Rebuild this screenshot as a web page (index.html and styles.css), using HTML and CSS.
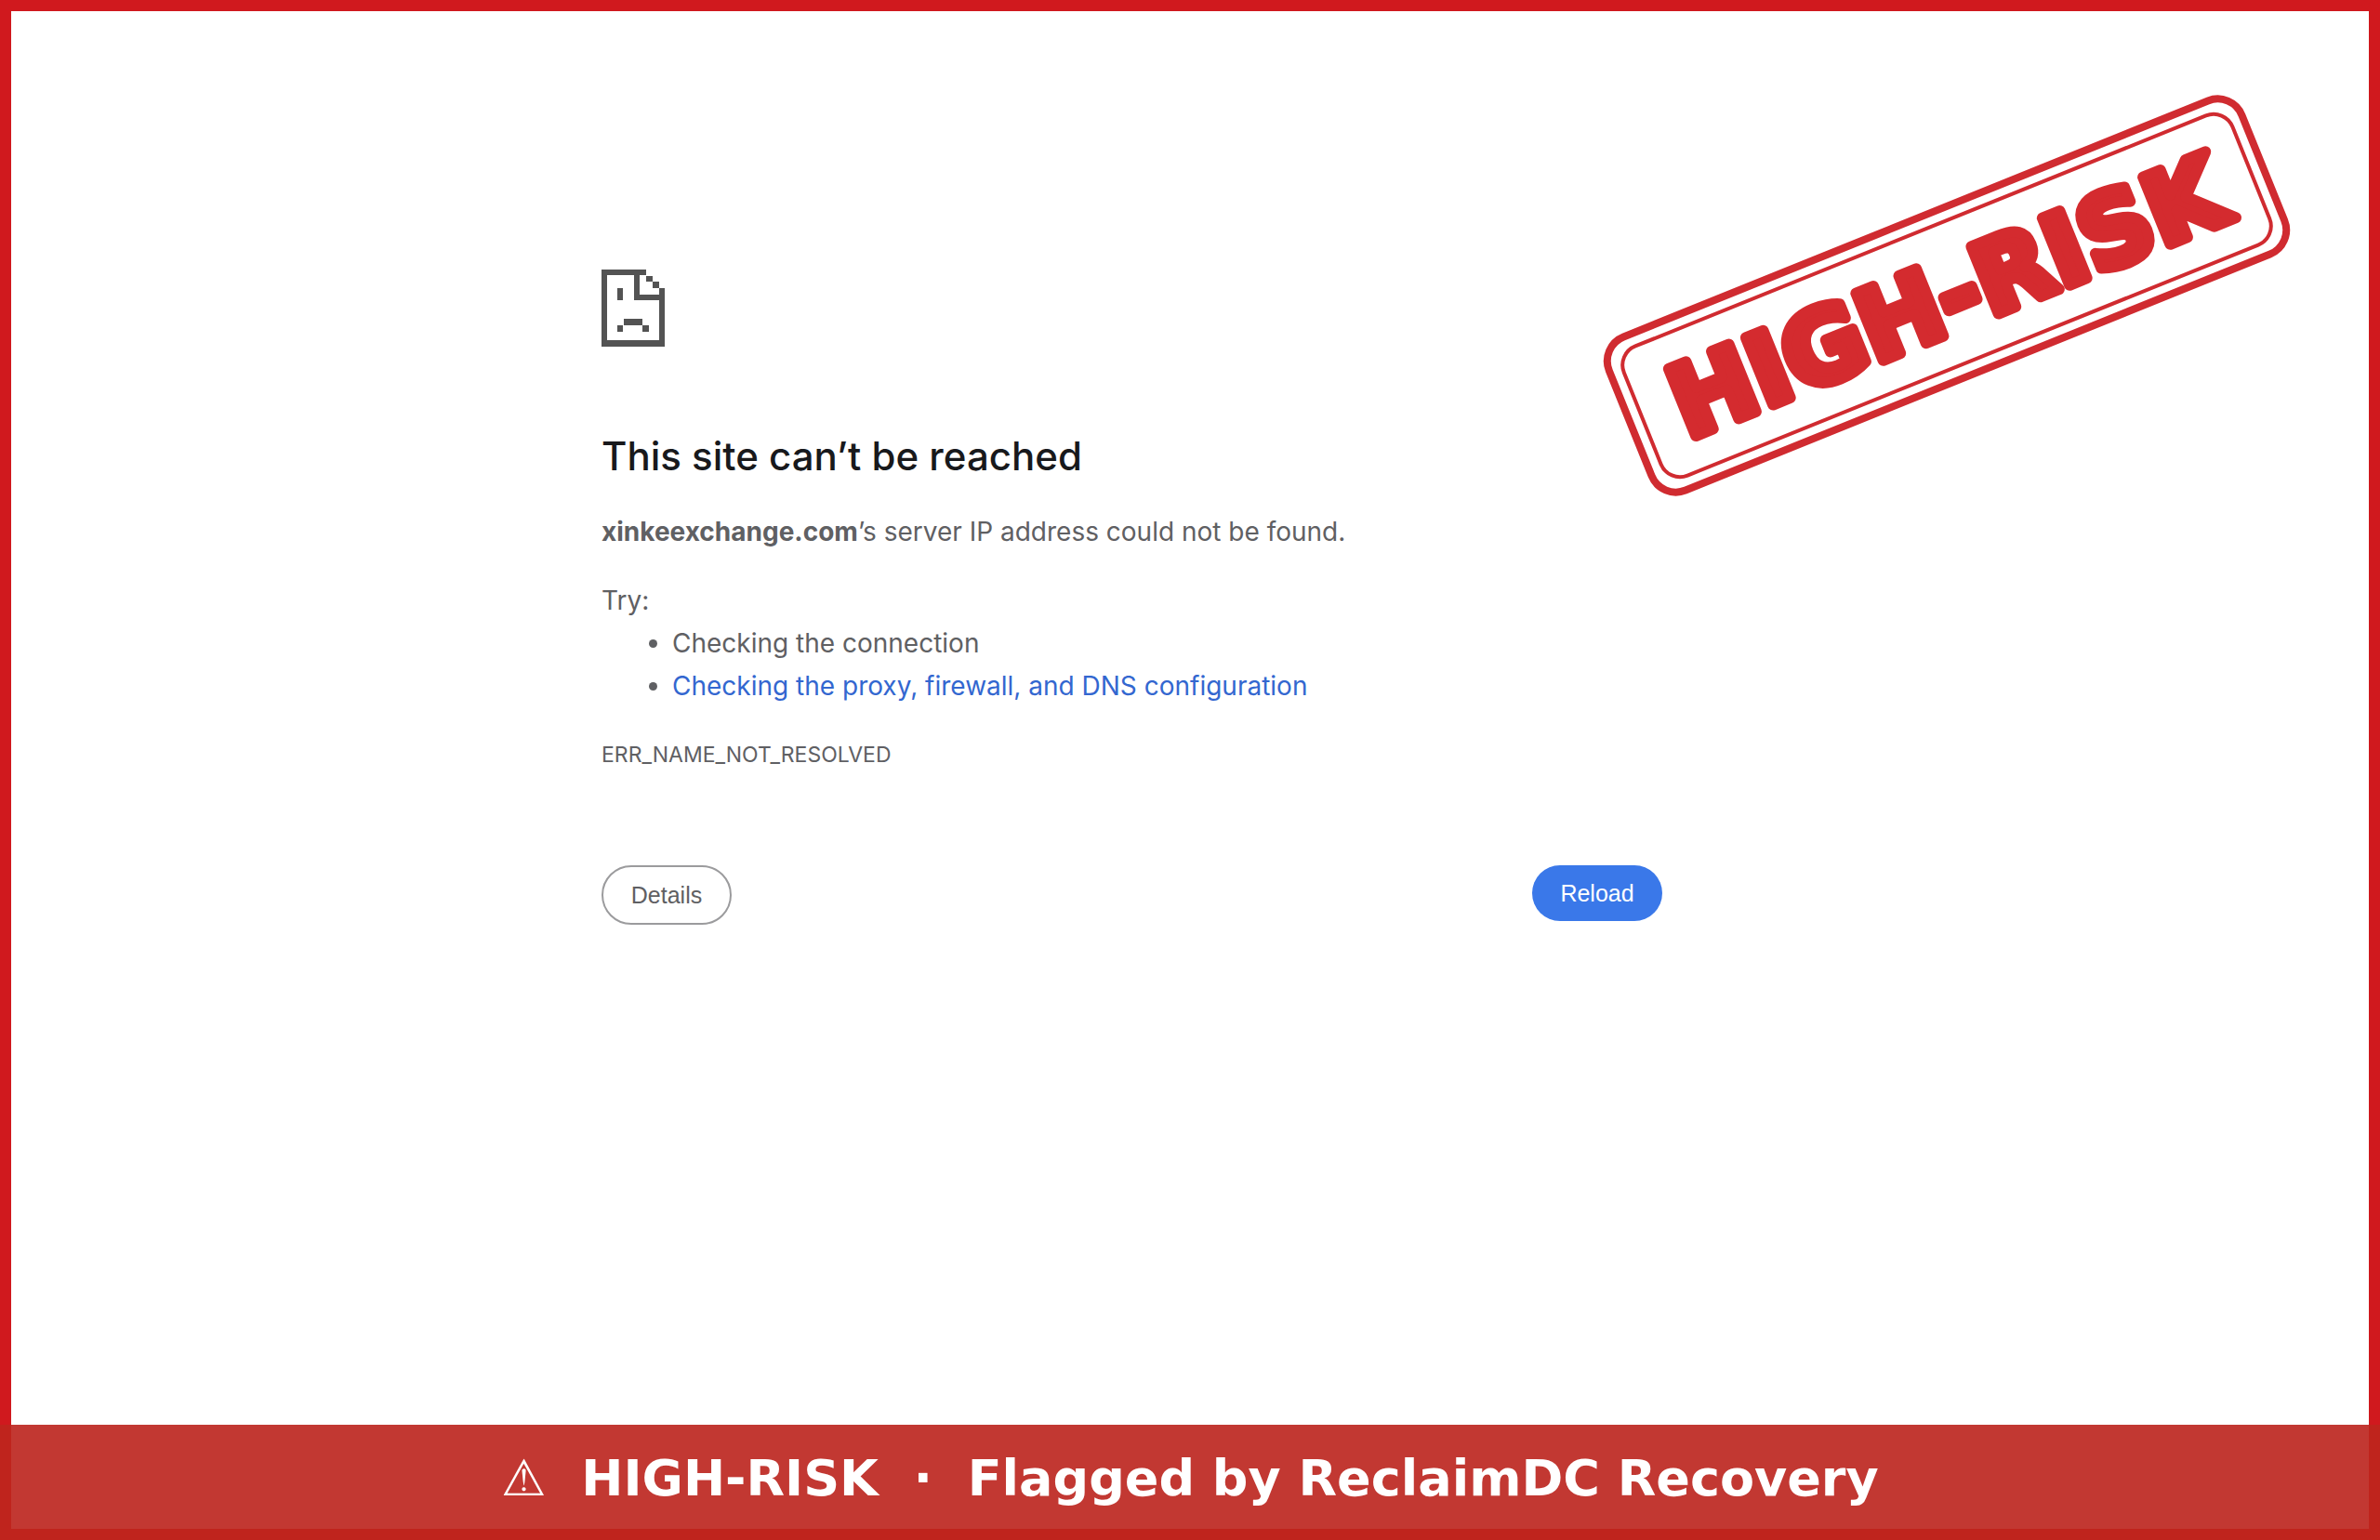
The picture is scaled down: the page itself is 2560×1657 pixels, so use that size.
FILE: index.html
```html
<!DOCTYPE html>
<html lang="en">
<head>
<meta charset="utf-8">
<title>xinkeexchange.com</title>
<link rel="stylesheet" href="styles.css">
</head>
<body>
<div class="page">
  <main class="error">
    <svg class="error-icon" viewBox="0 0 68 83" shape-rendering="crispEdges" aria-hidden="true">
      <path d="M0 0H48V6H41V27H62V20H68V83H0ZM6 6V76H62V33H35V6Z" fill-rule="evenodd"/>
      <path d="M48 7h7v6h-7zM55 13h7v7h-7zM17 20h6v13h-6zM24 53h20v7h-20zM17 60h6v7h-6zM44 60h7v7h-7z"/>
    </svg>
    <h1 class="title">This site can’t be reached</h1>
    <p class="summary"><strong>xinkeexchange.com</strong>’s server IP address could not be found.</p>
    <div class="suggestions">
      <p>Try:</p>
      <ul>
        <li>Checking the connection</li>
        <li><a href="#buttons">Checking the proxy, firewall, and DNS configuration</a></li>
      </ul>
    </div>
    <p class="code">ERR_NAME_NOT_RESOLVED</p>
    <div class="buttons" id="buttons">
      <button class="button details" type="button">Details</button>
      <button class="button reload" type="button">Reload</button>
    </div>
  </main>
  <svg class="stamp" viewBox="0 0 760 452" role="img" aria-label="High-risk">
    <g transform="translate(380 226) rotate(-22)">
      <rect class="stamp-outer" x="-367" y="-89" width="734" height="178" rx="28"/>
      <rect class="stamp-inner" x="-353" y="-75" width="706" height="150" rx="22"/>
      <text class="stamp-text" x="0" y="39" text-anchor="middle">HIGH-RISK</text>
    </g>
  </svg>
</div>
<footer class="banner">⚠&nbsp; HIGH-RISK &nbsp;·&nbsp; Flagged by ReclaimDC Recovery</footer>
</body>
</html>
```
FILE: styles.css
```css
* {
  box-sizing: border-box;
}

body {
  margin: 0;
  min-height: 100vh;
  display: flex;
  flex-direction: column;
  background: #fff;
  color: #5f6063;
  font: 28px/46px Inter, "Liberation Sans", sans-serif;
}

.page {
  position: relative;
  flex: 1;
  border: 12px solid #d0191e;
  border-bottom: 0;
}

.error {
  margin-left: 25%;
  max-width: 1142px;
  padding: 278px 0 0 1px;
}

.error-icon {
  display: block;
  width: 68px;
  height: 83px;
  fill: #535353;
}

.title {
  margin: 90px 0 30px;
  color: #18191c;
  font-size: 42px;
  font-weight: 500;
  line-height: 56px;
}

.summary,
.suggestions p,
.code {
  margin: 0;
}

.suggestions {
  margin: 28px 0;
}

.suggestions ul {
  margin: 0;
  padding-left: 76px;
}

.suggestions a {
  color: #3367d0;
  text-decoration: none;
}

.code {
  font-size: 23px;
}

.buttons {
  display: flex;
  justify-content: space-between;
  align-items: flex-start;
  margin-top: 96px;
}

.button {
  width: 140px;
  height: 60px;
  padding: 0;
  border: 0;
  border-radius: 32px;
  font: 25px/30px "Liberation Sans", Arial, sans-serif;
}

.details {
  height: 64px;
  border: 2px solid #9b9b9d;
  background: #fff;
  color: #5f6063;
}

.reload {
  background: #3a78e9;
  color: #fff;
}

.stamp {
  position: absolute;
  top: 80px;
  right: 74px;
  width: 760px;
  height: 452px;
}

.stamp-outer,
.stamp-inner {
  fill: none;
  stroke: #d02b30;
  stroke-width: 8px;
}

.stamp-inner {
  stroke-width: 4px;
}

.stamp-text {
  fill: #d42b2f;
  stroke: #d42b2f;
  stroke-width: 12px;
  stroke-linejoin: round;
  font: bold 107px "DejaVu Sans", sans-serif;
}

.banner {
  border: 12px solid #bf241d;
  border-top: 0;
  padding: 26px 0 22px;
  background: #c23832;
  color: #fff;
  font: bold 54px/64px "DejaVu Sans", sans-serif;
  text-align: center;
}
```
